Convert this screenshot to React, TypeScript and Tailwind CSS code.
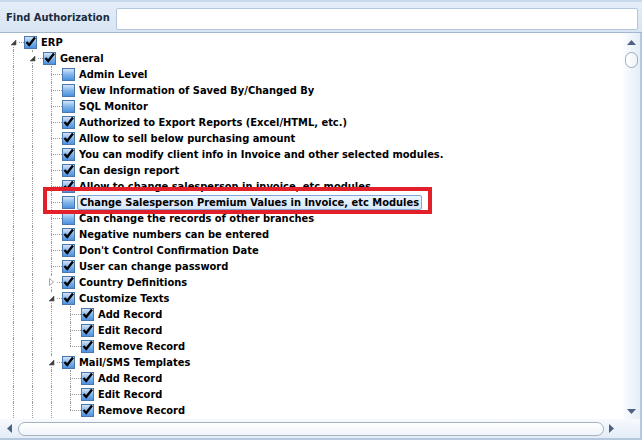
import React from 'react'

type Row = {
  label: string
  level: number
  checked: boolean
  expander?: 'open' | 'closed'
  first?: boolean
  last?: boolean
  selected?: boolean
}

const rows: Row[] = [
  { label: 'ERP', level: 0, checked: true, expander: 'open', first: true },
  { label: 'General', level: 1, checked: true, expander: 'open' },
  { label: 'Admin Level', level: 2, checked: false },
  { label: 'View Information of Saved By/Changed By', level: 2, checked: false },
  { label: 'SQL Monitor', level: 2, checked: false },
  { label: 'Authorized to Export Reports (Excel/HTML, etc.)', level: 2, checked: true },
  { label: 'Allow to sell below purchasing amount', level: 2, checked: true },
  { label: 'You can modify client info in Invoice and other selected modules.', level: 2, checked: true },
  { label: 'Can design report', level: 2, checked: true },
  { label: 'Allow to change salesperson in invoice, etc modules', level: 2, checked: true },
  { label: 'Change Salesperson Premium Values in Invoice, etc Modules', level: 2, checked: false, selected: true },
  { label: 'Can change the records of other branches', level: 2, checked: false },
  { label: 'Negative numbers can be entered', level: 2, checked: true },
  { label: "Don't Control Confirmation Date", level: 2, checked: true },
  { label: 'User can change password', level: 2, checked: true },
  { label: 'Country Definitions', level: 2, checked: true, expander: 'closed' },
  { label: 'Customize Texts', level: 2, checked: true, expander: 'open' },
  { label: 'Add Record', level: 3, checked: true },
  { label: 'Edit Record', level: 3, checked: true },
  { label: 'Remove Record', level: 3, checked: true, last: true },
  { label: 'Mail/SMS Templates', level: 2, checked: true, expander: 'open' },
  { label: 'Add Record', level: 3, checked: true },
  { label: 'Edit Record', level: 3, checked: true },
  { label: 'Remove Record', level: 3, checked: true, last: true },
]

const font = { fontFamily: '"DejaVu Sans Condensed", "DejaVu Sans", sans-serif' }

function Checkbox({ checked }: { checked: boolean }) {
  return (
    <div className="relative ml-[2px] h-[13px] w-[13px] shrink-0 border border-[#4a78ad] bg-gradient-to-b from-[#d3e5f9] via-[#82b5ea] to-[#4d91dc]">
      {checked && (
        <svg width="13" height="13" viewBox="0 0 13 13" className="absolute -left-px -top-[2px]">
          <path d="M2.5 7 L5.2 10 L11 2.5" stroke="#000" strokeWidth="2.4" fill="none" strokeLinejoin="miter" />
        </svg>
      )}
    </div>
  )
}

function Expander({ kind }: { kind: 'open' | 'closed' }) {
  return (
    <div className="absolute left-[6px] top-[3px] flex h-[10px] w-[9px] items-center justify-center bg-white">
      {kind === 'open' ? (
        <svg width="9" height="9" viewBox="0 0 9 9">
          <polygon points="7,2 7,7 2,7" fill="#3c3c3c" stroke="#555" strokeWidth="0.6" />
        </svg>
      ) : (
        <svg width="9" height="10" viewBox="0 0 9 10">
          <polygon points="2.5,1.5 6.5,5 2.5,8.5" fill="#fff" stroke="#a6a6a6" strokeWidth="1" />
        </svg>
      )}
    </div>
  )
}

function TreeRow({ row }: { row: Row }) {
  return (
    <div className="flex h-4 items-center pl-[3px]">
      {Array.from({ length: row.level }).map((_, i) => (
        <div key={i} className="relative h-full w-[19px] shrink-0">
          <div className="absolute left-[10px] top-0 h-4 border-l border-dotted border-[#9a9a9a]" />
        </div>
      ))}
      <div className="relative h-full w-[19px] shrink-0">
        {!row.first && <div className="absolute left-[10px] top-0 h-2 border-l border-dotted border-[#9a9a9a]" />}
        {!row.last && <div className="absolute left-[10px] top-2 h-2 border-l border-dotted border-[#9a9a9a]" />}
        <div className="absolute left-[10px] top-2 w-[11px] border-t border-dotted border-[#9a9a9a]" />
        {row.expander && <Expander kind={row.expander} />}
      </div>
      <Checkbox checked={row.checked} />
      {row.selected ? (
        <span className="ml-[2px] whitespace-nowrap rounded-[2px] border border-[#7fa6d4] bg-gradient-to-b from-[#eef5fd] to-[#d6e7fa] px-[2px] text-[11px] leading-[13px] font-bold text-black">
          {row.label}
        </span>
      ) : (
        <span className="ml-[4px] whitespace-nowrap text-[11px] leading-[15px] font-bold text-black">{row.label}</span>
      )}
    </div>
  )
}

export default function App() {
  return (
    <div className="flex h-[440px] w-[642px] flex-col overflow-hidden bg-[#e9f0f8]" style={font}>
      <div className="flex h-[33px] shrink-0 items-center gap-[6px] border-t-2 border-b border-t-[#c9d8ea] border-b-[#a3b6cd] bg-gradient-to-b from-[#e4edf8] to-[#d9e5f3] pl-[6px] pr-[4px] pt-[3px]">
        <span className="text-[11px] font-bold text-[#1b2a3d]">Find Authorization</span>
        <div className="h-[22px] flex-1 rounded-[2px] border border-[#b3c6dd] bg-white" />
      </div>
      <div className="flex min-h-0 flex-1 border-r-2 border-[#b6c8dd]">
        <div className="relative min-w-0 flex-1 overflow-hidden bg-white pt-px">
          {rows.map((r, i) => (
            <TreeRow key={i} row={r} />
          ))}
          <div className="absolute left-[43px] top-[154px] h-[27px] w-[389px] border-4 border-[#e3202a]" />
        </div>
        <div className="flex w-[17px] shrink-0 flex-col items-center bg-gradient-to-r from-[#fbfdff] to-[#e4edf8]">
          <svg width="9" height="5" viewBox="0 0 9 5" className="mt-[7px]">
            <polygon points="4.5,0 9,5 0,5" fill="#4d6185" />
          </svg>
          <div className="mt-[7px] h-[16px] w-[13px] rounded-full border border-[#a2aab5] bg-gradient-to-r from-white to-[#eef2f7]" />
          <div className="flex-1" />
          <svg width="9" height="5" viewBox="0 0 9 5" className="mb-[5px]">
            <polygon points="0,0 9,0 4.5,5" fill="#4d6185" />
          </svg>
        </div>
      </div>
      <div className="flex h-[21px] shrink-0 items-center border-r-2 border-b-2 border-[#b6c8dd] bg-gradient-to-b from-[#f7fafe] to-[#e3ecf7]">
        <svg width="5" height="9" viewBox="0 0 5 9" className="ml-[7px]">
          <polygon points="0,4.5 5,0 5,9" fill="#4d6185" />
        </svg>
        <div className="ml-[6px] h-[14px] w-[586px] rounded-full border border-[#a7b2bf] bg-gradient-to-b from-white to-[#f0f4f9]" />
        <svg width="5" height="9" viewBox="0 0 5 9" className="ml-[5px]">
          <polygon points="0,0 5,4.5 0,9" fill="#4d6185" />
        </svg>
      </div>
    </div>
  )
}
